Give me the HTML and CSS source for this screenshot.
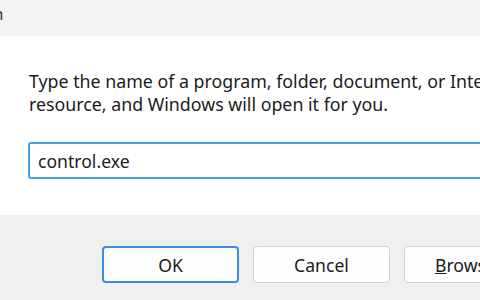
FILE: index.html
```html
<!DOCTYPE html>
<html lang="en">
<head>
    <meta charset="UTF-8">
    <title>Run</title>
    <link rel="stylesheet" href="styles.css">
</head>
<body>
    <div class="titlebar">
        <span class="title">Run</span>
    </div>

    <div class="content">
        <p class="prompt">Type the name of a program, folder, document, or Internet<br>resource, and Windows will open it for you.</p>
        <div class="field">
            <input class="command" type="text" value="control.exe">
        </div>
    </div>

    <div class="footer">
        <button class="btn btn-default">OK</button>
        <button class="btn">Cancel</button>
        <button class="btn"><u>B</u>rowse...</button>
    </div>
</body>
</html>
```

FILE: styles.css
```css
body {
    margin: 0;
    width: 480px;
    height: 300px;
    overflow: hidden;
    font-family: "Noto Sans", "Open Sans", sans-serif;
    color: #1b1b1b;
    background: #f0f0f0;
}

.titlebar {
    height: 36px;
    background: #f3f3f3;
    overflow: hidden;
}

.title {
    display: block;
    margin-left: -28px;
    padding-top: 2px;
    font-size: 17px;
    color: #333;
}

.content {
    background: #fff;
    height: 179px;
    padding: 0 0 0 29px;
    box-sizing: border-box;
    overflow: hidden;
}

.prompt {
    margin: 0;
    padding-top: 34px;
    width: 640px;
    font-size: 17.8px;
    line-height: 23px;
    white-space: nowrap;
}

.field {
    margin-top: 26px;
}

.command {
    display: block;
    box-sizing: border-box;
    width: 560px;
    height: 37px;
    margin-left: -1px;
    padding: 0 8px;
    border: 2px solid #4a9ee3;
    border-radius: 3px;
    font-family: inherit;
    font-size: 17.6px;
    color: #1b1b1b;
    outline: none;
}

.footer {
    display: flex;
    gap: 14px;
    padding: 31px 0 0 102px;
    width: 700px;
}

.btn {
    flex: none;
    width: 137px;
    height: 37px;
    background: #fdfdfd;
    border: 1px solid #d3d3d3;
    border-radius: 4px;
    font-family: inherit;
    font-size: 17.6px;
    color: #1b1b1b;
    padding: 0;
}

.btn-default {
    border: 2px solid #3a8ee6;
}
```
